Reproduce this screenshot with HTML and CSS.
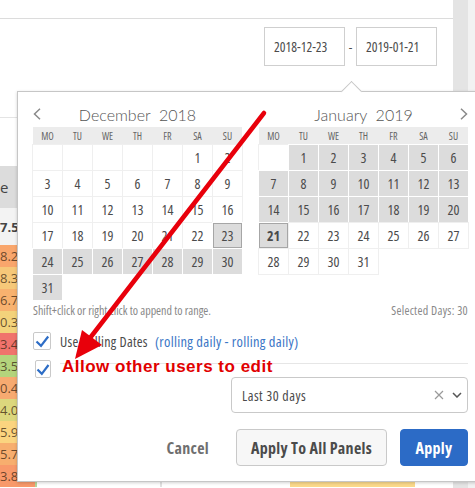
FILE: index.html
```html
<!DOCTYPE html>
<html>
<head>
<meta charset="utf-8">
<title>Date range</title>
<link rel="stylesheet" href="styles.css">
</head>
<body>
<div class="app">
  <div class="main">
    <div class="topbar"></div>
    <div class="toolbar">
      <div class="date-input">2018-12-23</div>
      <span class="dash">-</span>
      <div class="date-input">2019-01-21</div>
    </div>
    <div class="table">
      <div class="trow blank"></div>
      <div class="trow head"><span class="cell c1">e</span></div>
      <div class="trow total"><span class="cell c1">7.5€</span></div>
      <div class="trow"><span class="cell c1 h1">8.23%</span><span class="cell c2"></span><span class="cell c3"></span><span class="cell c4"></span></div>
      <div class="trow"><span class="cell c1 h2">8.32%</span><span class="cell c2"></span><span class="cell c3"></span><span class="cell c4"></span></div>
      <div class="trow"><span class="cell c1 h3">6.74%</span><span class="cell c2"></span><span class="cell c3"></span><span class="cell c4"></span></div>
      <div class="trow"><span class="cell c1 h4">0.36%</span><span class="cell c2"></span><span class="cell c3"></span><span class="cell c4"></span></div>
      <div class="trow"><span class="cell c1 h5">3.44%</span><span class="cell c2"></span><span class="cell c3"></span><span class="cell c4"></span></div>
      <div class="trow"><span class="cell c1 h6">3.57%</span><span class="cell c2"></span><span class="cell c3"></span><span class="cell c4"></span></div>
      <div class="trow"><span class="cell c1 h7">0.49%</span><span class="cell c2"></span><span class="cell c3"></span><span class="cell c4"></span></div>
      <div class="trow"><span class="cell c1 h8">4.09%</span><span class="cell c2"></span><span class="cell c3"></span><span class="cell c4"></span></div>
      <div class="trow"><span class="cell c1 h9">5.92%</span><span class="cell c2"></span><span class="cell c3"></span><span class="cell c4"></span></div>
      <div class="trow"><span class="cell c1 h10">5.73%</span><span class="cell c2"></span><span class="cell c3"></span><span class="cell c4"></span></div>
      <div class="trow"><span class="cell c1 h11">3.89%</span><span class="cell c2"></span><span class="cell c3"></span><span class="cell c4 yellow"></span></div>
    </div>
  </div>
  <div class="scrollbar"></div>
</div>

<div class="popover">
  <div class="calendars">
    <div class="cal">
      <div class="cal-title">
        <svg class="nav" width="8" height="12" viewBox="0 0 8 12"><polyline points="7,0.8 1.5,6 7,11.2" fill="none" stroke="#8a8a8a" stroke-width="1.5"/></svg>
        <span class="month">December  2018</span>
        <span></span>
      </div>
      <div class="dow"><span>MO</span><span>TU</span><span>WE</span><span>TH</span><span>FR</span><span>SA</span><span>SU</span></div>
      <div class="days">
        <span class="day"></span><span class="day"></span><span class="day"></span><span class="day"></span><span class="day"></span><span class="day">1</span><span class="day">2</span>
        <span class="day">3</span><span class="day">4</span><span class="day">5</span><span class="day">6</span><span class="day">7</span><span class="day">8</span><span class="day">9</span>
        <span class="day">10</span><span class="day">11</span><span class="day">12</span><span class="day">13</span><span class="day">14</span><span class="day">15</span><span class="day">16</span>
        <span class="day">17</span><span class="day">18</span><span class="day">19</span><span class="day">20</span><span class="day">21</span><span class="day">22</span><span class="day sel edge">23</span>
        <span class="day sel">24</span><span class="day sel">25</span><span class="day sel">26</span><span class="day sel">27</span><span class="day sel">28</span><span class="day sel">29</span><span class="day sel">30</span>
        <span class="day sel">31</span>
      </div>
    </div>
    <div class="cal">
      <div class="cal-title">
        <span></span>
        <span class="month">January  2019</span>
        <svg class="nav right" width="8" height="12" viewBox="0 0 8 12"><polyline points="1,0.8 6.5,6 1,11.2" fill="none" stroke="#8a8a8a" stroke-width="1.5"/></svg>
      </div>
      <div class="dow"><span>MO</span><span>TU</span><span>WE</span><span>TH</span><span>FR</span><span>SA</span><span>SU</span></div>
      <div class="days">
        <span class="day"></span><span class="day sel">1</span><span class="day sel">2</span><span class="day sel">3</span><span class="day sel">4</span><span class="day sel">5</span><span class="day sel">6</span>
        <span class="day sel">7</span><span class="day sel">8</span><span class="day sel">9</span><span class="day sel">10</span><span class="day sel">11</span><span class="day sel">12</span><span class="day sel">13</span>
        <span class="day sel">14</span><span class="day sel">15</span><span class="day sel">16</span><span class="day sel">17</span><span class="day sel">18</span><span class="day sel">19</span><span class="day sel">20</span>
        <span class="day sel edge bold">21</span><span class="day">22</span><span class="day">23</span><span class="day">24</span><span class="day">25</span><span class="day">26</span><span class="day">27</span>
        <span class="day">28</span><span class="day">29</span><span class="day">30</span><span class="day">31</span>
      </div>
    </div>
  </div>

  <div class="hint-row">
    <span>Shift+click or right click to append to range.</span>
    <span class="selected-days">Selected Days: 30</span>
  </div>

  <div class="check-row">
    <span class="checkbox"><svg width="18" height="18" viewBox="0 0 18 18"><polyline points="3.5,9.5 8,13.8 15.2,4.5" fill="none" stroke="#2d6dc6" stroke-width="2.2"/></svg></span>
    <span class="check-label">Use Rolling Dates</span>
    <span class="rolling">(rolling daily - rolling daily)</span>
  </div>

  <div class="check-row second">
    <span class="checkbox small"><svg width="16" height="18" viewBox="0 0 16 18"><polyline points="2.5,9.5 6.8,13.8 13.5,5" fill="none" stroke="#2d6dc6" stroke-width="2.2"/></svg></span>
    <span class="sep"></span>
  </div>

  <div class="select-row">
    <div class="select">
      <span class="select-value">Last 30 days</span>
      <svg class="clear" width="10" height="10" viewBox="0 0 10 10"><path d="M1 1 L9 9 M9 1 L1 9" stroke="#9a9a9a" stroke-width="1.2" fill="none"/></svg>
      <svg class="chev" width="10" height="6" viewBox="0 0 10 6"><polyline points="1,1 5,5 9,1" fill="none" stroke="#555" stroke-width="1.5"/></svg>
    </div>
  </div>

  <div class="actions">
    <button class="btn-text">Cancel</button>
    <button class="btn">Apply To All Panels</button>
    <button class="btn primary">Apply</button>
  </div>
</div>

<svg class="annot" width="475" height="488" viewBox="0 0 475 488">
  <line x1="264" y1="113" x2="90" y2="338" stroke="#e8000b" stroke-width="4.5" stroke-linecap="round"/>
  <polygon points="75,359 102,345 82,330" fill="#e8000b"/>
</svg>
<div class="annot-text">Allow other users to edit</div>
</body>
</html>
```

FILE: styles.css
```css
* { box-sizing: border-box; }
html, body { margin: 0; padding: 0; }
body {
  width: 475px;
  height: 488px;
  overflow: hidden;
  position: relative;
  background: #fff;
  font-family: "Open Sans", "Liberation Sans", Arial, sans-serif;
  font-stretch: 75%;
  color: #4b4b4b;
}

/* background page */
.app { display: flex; height: 488px; }
.main { width: 453px; overflow: hidden; }
.scrollbar {
  width: 22px;
  background: linear-gradient(to right, #e4e4e4 0, #e4e4e4 15px, #f2f2f2 15px);
}
.topbar { height: 19px; border-bottom: 1px solid #dcdcdc; }
.toolbar {
  height: 98px;
  display: flex;
  justify-content: flex-end;
  align-items: flex-start;
  padding: 8px 16px 0 0;
}
.date-input {
  width: 81px;
  height: 39px;
  border: 1px solid #cfcfcf;
  padding-left: 9px;
  display: flex;
  align-items: center;
  font-size: 13.5px;
  color: #4b4b4b;
}
.dash {
  width: 11px;
  height: 39px;
  display: flex;
  align-items: center;
  justify-content: center;
  font-size: 13px;
}

.table { border-top: 1px solid #e4e4e4; font-stretch: 96%; }
.trow { display: flex; height: 22px; font-size: 13px; }
.trow.blank { height: 48px; }
.trow.head { height: 42px; background: #dcdcdc; font-size: 15px; }
.trow.total { height: 37px; background: #f3f3f3; font-weight: bold; }
.cell { display: flex; align-items: center; overflow: hidden; white-space: nowrap; }
.c1 { width: 35px; padding-left: 0; color: rgba(60, 40, 20, 0.75); }
.trow.head .c1, .trow.total .c1 { color: #444; }
.c2 { width: 125px; border-left: 2px solid #b5d79b; background: #fff; }
.c3 { width: 130px; border-left: 2px solid #e2e2e2; background: #fff; }
.c4 { width: 125px; background: #fff; }
.c4.yellow { background: #fbd98b; }
.h1 { background: #f9a66c; }
.h2 { background: #f6c879; }
.h3 { background: #f8b26f; }
.h4 { background: #f3d27b; }
.h5 { background: #f0736c; }
.h6 { background: #b4d47c; }
.h7 { background: #f7aa70; }
.h8 { background: #dcd77d; }
.h9 { background: #fbd47f; }
.h10 { background: #f7ae6e; }
.h11 { background: #f8996a; }

/* popover */
.popover {
  position: absolute;
  left: 17px;
  top: 91px;
  width: 467px;
  background: #fff;
  border: 1px solid #c6c6c6;
  box-shadow: 0 1px 3px rgba(0, 0, 0, 0.18);
  padding: 11px 15px 15px;
  z-index: 5;
}
.popover::before {
  content: "";
  position: absolute;
  left: 326px;
  top: -8px;
  width: 14px;
  height: 14px;
  background: #fff;
  border-top: 1px solid #c6c6c6;
  border-left: 1px solid #c6c6c6;
  transform: rotate(45deg);
}

.calendars { display: flex; gap: 17px; }
.cal { flex: 1; }
.cal-title {
  display: grid;
  grid-template-columns: 10px 1fr 10px;
  align-items: center;
  height: 22px;
  margin-bottom: 2px;
}
.nav { display: block; }
.nav.right { justify-self: end; }
.month {
  text-align: center;
  font-family: Lato, sans-serif;
  font-stretch: normal;
  font-weight: 300;
  font-size: 16px;
  color: #555;
  white-space: pre;
}
.dow {
  display: grid;
  grid-template-columns: repeat(7, 1fr);
  column-gap: 1px;
  height: 17px;
  background: #ececec;
  font-size: 10px;
  color: #666;
  align-items: center;
  text-align: center;
}
.days {
  display: grid;
  grid-template-columns: repeat(7, 1fr);
  gap: 1px;
  margin-top: 1px;
}
.day {
  height: 25px;
  display: flex;
  align-items: center;
  justify-content: center;
  font-size: 14px;
  color: #4b4b4b;
  box-shadow: 0 0 0 1px #efefef;
}
.day.sel { background: #dcdcdc; box-shadow: 0 0 0 1px #fff; }
.day.edge { box-shadow: 0 0 0 1px #fff, inset 0 0 0 1px #a6a6a6; }
.day.bold { font-weight: bold; }

.hint-row {
  display: flex;
  justify-content: space-between;
  margin-top: 4px;
  line-height: 14px;
  font-size: 12px;
  color: #888;
}
.selected-days { letter-spacing: 0.3px; }

.check-row {
  display: flex;
  align-items: center;
  height: 18px;
  margin-top: 14px;
  font-size: 14px;
  letter-spacing: 0.3px;
}
.check-row.second { margin-top: 10px; align-items: flex-start; }
.checkbox {
  width: 18px;
  height: 18px;
  border: 1px solid #c9c9c9;
  border-radius: 2px;
  background: #fff;
  position: relative;
  flex: none;
}
.checkbox svg { position: absolute; left: -1px; top: -1px; }
.checkbox.small { width: 16px; margin-left: 2px; }
.check-label { margin-left: 9px; color: #4b4b4b; }
.rolling { margin-left: 7px; color: #3b76c6; font-size: 14.5px; }
.sep {
  flex: 1;
  height: 1px;
  background: #e6e6e6;
  margin: 3px 0 0 9px;
}

.select-row {
  display: flex;
  justify-content: flex-end;
  margin-top: -1px;
}
.select {
  width: 237px;
  height: 36px;
  border: 1px solid #c9c9c9;
  border-radius: 4px;
  display: flex;
  align-items: center;
  padding: 0 5px 0 10px;
}
.select-value { flex: 1; font-size: 14px; letter-spacing: 0.5px; color: #4b4b4b; }
.clear { margin-right: 8px; }

.actions {
  display: flex;
  justify-content: flex-end;
  gap: 13px;
  margin-top: 16px;
}
.actions button {
  height: 37px;
  font-family: "Open Sans", "Liberation Sans", Arial, sans-serif;
  font-stretch: 75%;
  font-weight: bold;
  font-size: 16px;
  letter-spacing: 0.3px;
  border-radius: 4px;
  cursor: pointer;
}
.btn-text {
  background: none;
  border: none;
  padding: 0 14px;
  color: #6f6f6f;
}
.btn {
  width: 151px;
  border: 1px solid #c9c9c9;
  background: #f7f7f7;
  color: #4b4b4b;
  padding: 0;
}
.btn.primary {
  width: 68px;
  background: #2c6bc6;
  border-color: #2c6bc6;
  color: #fff;
}

/* annotation overlay */
.annot {
  position: absolute;
  left: 0;
  top: 0;
  z-index: 10;
  pointer-events: none;
}
.annot-text {
  position: absolute;
  left: 62px;
  top: 357px;
  z-index: 10;
  font-family: "Liberation Sans", Arial, sans-serif;
  font-stretch: normal;
  font-weight: bold;
  font-size: 17px;
  line-height: 20px;
  letter-spacing: 0.5px;
  color: #e10000;
  white-space: nowrap;
}
```
